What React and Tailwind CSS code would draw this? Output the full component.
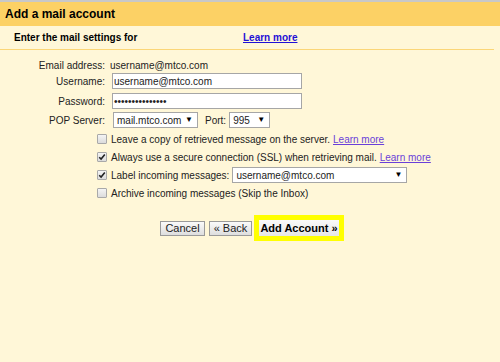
const font = { fontFamily: '"Liberation Sans", Arial, sans-serif' };

function Checkbox({ checked }) {
  return (
    <span className="flex h-[10px] w-[10px] items-center justify-center rounded-[1px] border border-[#a9a9a9] bg-gradient-to-b from-[#f4f4f4] to-[#dcdcdc]">
      {checked && (
        <svg width="8" height="8" viewBox="0 0 8 8">
          <path d="M1.2 4.2 L3.1 6.1 L6.8 1.6" fill="none" stroke="#222" strokeWidth="1.6" />
        </svg>
      )}
    </span>
  );
}

function Select({ value, width }) {
  return (
    <div
      className={`flex h-[16px] items-center justify-between border border-[#a6a6a6] bg-white pl-[3px] pr-[4px] ${width}`}
    >
      <span>{value}</span>
      <span className="text-[8px] leading-none text-black">▼</span>
    </div>
  );
}

function Button({ children, className = "" }) {
  return (
    <div
      className={`flex h-[15px] items-center justify-center border border-[#9a9a9a] bg-gradient-to-b from-[#fafafa] to-[#dedede] text-[11px] text-[#222] ${className}`}
    >
      {children}
    </div>
  );
}

export default function App() {
  return (
    <div className="h-[362px] w-[500px] overflow-hidden bg-[#fff7d8] text-[10px] text-[#222]" style={font}>
      <div className="border-t-2 border-[#c8c8c8]">
        <div className="flex h-[24px] items-center bg-[#fcd165] pl-[5px] text-[12px] font-bold text-black">
          Add a mail account
        </div>
      </div>
      <div className="flex h-[24px] w-[494px] items-center border-b border-[#fbd677] pl-[14px] font-bold text-black">
        <span className="w-[229px]">Enter the mail settings for</span>
        <a className="text-[#1f10d6] underline">Learn more</a>
      </div>

      <div className="pt-[7px]">
        <div className="flex h-[16px] items-center">
          <span className="w-[108px] pr-[3px] text-right">Email address:</span>
          <span className="pl-[2px]">username@mtco.com</span>
        </div>
        <div className="flex h-[16px] items-center">
          <span className="w-[108px] pr-[3px] text-right">Username:</span>
          <div className="ml-[4px] flex h-[16px] w-[190px] items-center border border-[#a6a6a6] bg-white pl-[1px]">
            username@mtco.com
          </div>
        </div>
        <div className="mt-[4px] flex h-[16px] items-center">
          <span className="w-[108px] pr-[3px] text-right">Password:</span>
          <div className="ml-[4px] flex h-[16px] w-[190px] items-center border border-[#a6a6a6] bg-white pl-[1px] text-[10px]">
            •••••••••••••••
          </div>
        </div>
        <div className="mt-[3px] flex h-[16px] items-center">
          <span className="w-[108px] pr-[3px] text-right">POP Server:</span>
          <div className="ml-[5px]">
            <Select value="mail.mtco.com" width="w-[85px]" />
          </div>
          <span className="ml-[7px] mr-[3px]">Port:</span>
          <Select value="995" width="w-[41px]" />
        </div>

        <div className="mt-[2px]">
          <div className="flex h-[18px] items-center">
            <span className="ml-[97px] mr-[4px]"><Checkbox /></span>
            <span>Leave a copy of retrieved message on the server.</span>
            <a className="ml-[3px] text-[#6a3fd9] underline">Learn more</a>
          </div>
          <div className="flex h-[18px] items-center">
            <span className="ml-[97px] mr-[4px]"><Checkbox checked /></span>
            <span>Always use a secure connection (SSL) when retrieving mail.</span>
            <a className="ml-[3px] text-[#6a3fd9] underline">Learn more</a>
          </div>
          <div className="flex h-[18px] items-center">
            <span className="ml-[97px] mr-[4px]"><Checkbox checked /></span>
            <span className="mr-[3px]">Label incoming messages:</span>
            <Select value="username@mtco.com" width="w-[175px]" />
          </div>
          <div className="flex h-[18px] items-center">
            <span className="ml-[97px] mr-[4px]"><Checkbox /></span>
            <span>Archive incoming messages (Skip the Inbox)</span>
          </div>
        </div>

        <div className="mt-[13px] flex items-center pl-[160px]">
          <Button className="w-[45px]">Cancel</Button>
          <Button className="ml-[4px] w-[43px]">« Back</Button>
          <div className="ml-[2px] border-[5px] border-[#ffff00]">
            <div className="flex h-[16px] w-[80px] items-center justify-center bg-gradient-to-b from-[#fafafa] to-[#e6e6e6] text-[11px] font-bold text-black">
              Add Account »
            </div>
          </div>
        </div>
      </div>
    </div>
  );
}
